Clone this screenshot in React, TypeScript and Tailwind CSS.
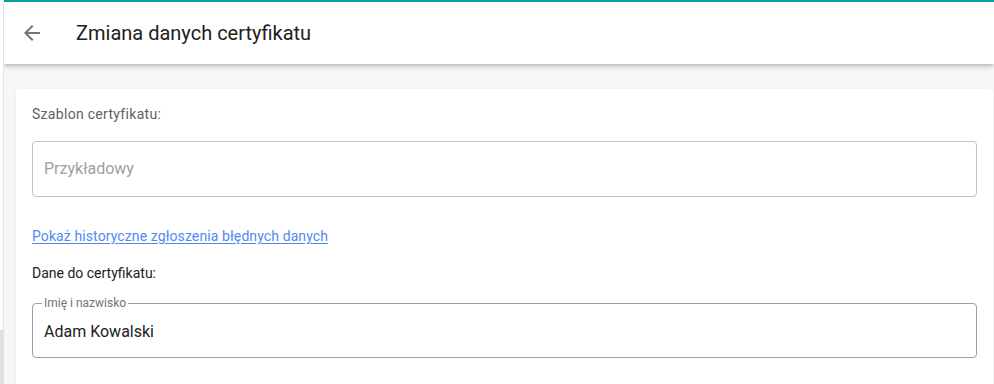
function ArrowBack() {
  return (
    <svg viewBox="0 0 24 24" className="h-6 w-6" fill="#757575">
      <path d="M20 11H7.83l5.59-5.59L12 4l-8 8 8 8 1.41-1.41L7.83 13H20v-2z" />
    </svg>
  );
}

export default function App() {
  return (
    <div
      className="flex h-[384px] w-[994px] overflow-hidden"
      style={{ fontFamily: "Roboto, 'Noto Sans', Arial, sans-serif" }}
    >
      <div className="flex w-[4px] shrink-0 flex-col">
        <div className="h-[330px] shrink-0 border-r border-[#e3e3e3] bg-white" />
        <div className="flex-1 bg-[#e0e0e0]" />
      </div>

      <div className="flex min-h-0 flex-1 flex-col overflow-hidden bg-[#f7f7f7]">
        <header className="relative z-10 flex h-16 shrink-0 items-center border-t-2 border-[#0a9ba3] bg-white pl-4 shadow-[0_2px_5px_rgba(0,0,0,0.28)]">
          <button className="flex h-6 w-6 items-center justify-center">
            <ArrowBack />
          </button>
          <h1 className="ml-8 text-[20px] leading-7 text-[#212121]">Zmiana danych certyfikatu</h1>
        </header>

        <div className="shrink-0 pl-3 pr-px pt-[25px]">
          <div className="rounded bg-white px-4 pt-[15px] pb-12 shadow-[0_1px_3px_rgba(0,0,0,0.08)]">
            <p className="text-sm leading-5 tracking-[0.3px] text-[#616161]">Szablon certyfikatu:</p>

            <div className="mt-[17px] flex h-14 items-center rounded border border-[#c4c4c4] px-[11px]">
              <span className="text-base text-[#a0a0a0]">Przykładowy</span>
            </div>

            <a
              href="#"
              className="mt-[29px] block w-fit text-sm leading-5 tracking-[0.1px] text-[#5189f2] underline underline-offset-2"
            >
              Pokaż historyczne zgłoszenia błędnych danych
            </a>

            <p className="mt-[17px] text-sm leading-5 text-[#212121]">Dane do certyfikatu:</p>

            <fieldset className="mt-[12px] h-[63px] rounded border border-[#9e9e9e] px-[11px]">
              <legend className="-ml-[2px] px-[2px] text-xs leading-4 text-[#757575]">Imię i nazwisko</legend>
              <div className="flex h-[44px] items-center pb-[3px] text-base text-[#212121]">Adam Kowalski</div>
            </fieldset>
          </div>
        </div>
      </div>
    </div>
  );
}
